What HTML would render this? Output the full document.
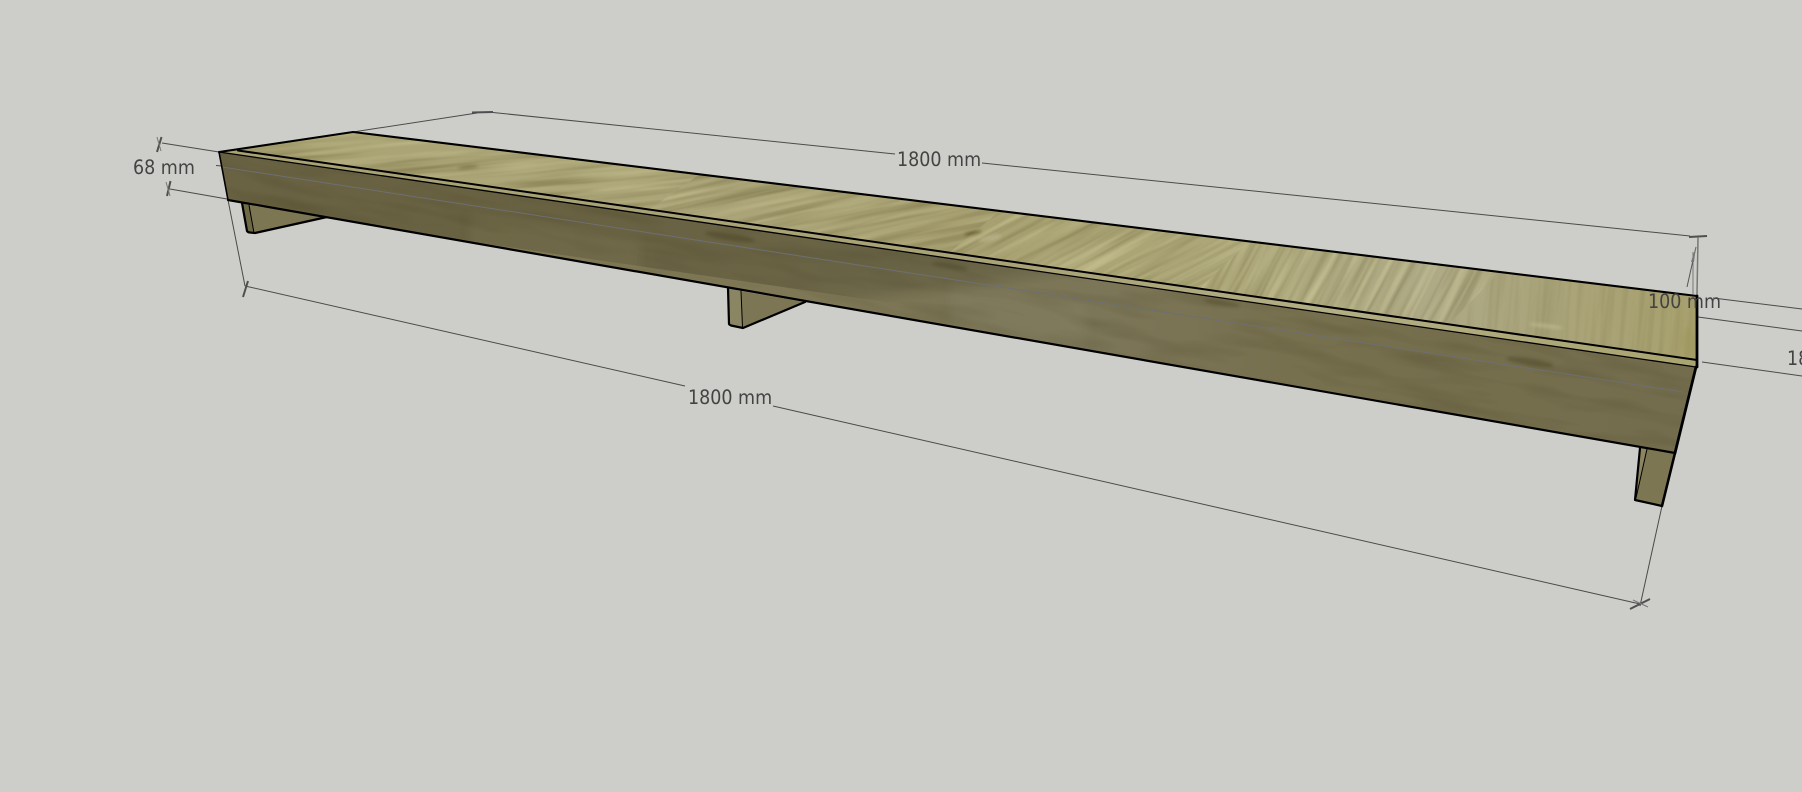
<!DOCTYPE html>
<html lang="en">
<head>
<meta charset="utf-8">
<title>Shelf model</title>
<style>
html,body{margin:0;padding:0;background:#cdcec9;width:1802px;height:792px;overflow:hidden}
svg{display:block}
text{font-family:"DejaVu Sans","Liberation Sans",sans-serif;font-size:17.5px;fill:#434343}
</style>
</head>
<body>
<svg width="1802" height="792" viewBox="0 0 1802 792" xmlns="http://www.w3.org/2000/svg">
<defs>
  <linearGradient id="topG" gradientUnits="userSpaceOnUse" x1="220" y1="0" x2="1697" y2="0">
    <stop offset="0" stop-color="#a8a272"/>
    <stop offset=".2" stop-color="#aca678"/>
    <stop offset=".35" stop-color="#aaa478"/>
    <stop offset=".5" stop-color="#a8a172"/>
    <stop offset=".62" stop-color="#aba576"/>
    <stop offset=".72" stop-color="#ada87c"/>
    <stop offset=".82" stop-color="#aeaa86"/>
    <stop offset=".9" stop-color="#aaa47a"/>
    <stop offset="1" stop-color="#a8a16e"/>
  </linearGradient>
  <linearGradient id="frontG" gradientUnits="userSpaceOnUse" x1="220" y1="0" x2="1697" y2="0">
    <stop offset="0" stop-color="#7d7754"/>
    <stop offset=".2" stop-color="#7b7451"/>
    <stop offset=".38" stop-color="#7e7856"/>
    <stop offset=".5" stop-color="#7b7556"/>
    <stop offset=".6" stop-color="#7c7658"/>
    <stop offset=".72" stop-color="#77704f"/>
    <stop offset=".85" stop-color="#746e4d"/>
    <stop offset="1" stop-color="#736d4e"/>
  </linearGradient>
  <linearGradient id="band" gradientUnits="userSpaceOnUse" x1="950" y1="258" x2="955.500" y2="296">
    <stop offset="0" stop-color="#2a2410" stop-opacity=".24"/>
    <stop offset=".55" stop-color="#2a2410" stop-opacity=".18"/>
    <stop offset="1" stop-color="#2a2410" stop-opacity="0"/>
  </linearGradient>
  <linearGradient id="trimG" gradientUnits="userSpaceOnUse" x1="220" y1="0" x2="1697" y2="0">
    <stop offset="0" stop-color="#a8a274"/>
    <stop offset=".55" stop-color="#a9a377"/>
    <stop offset=".75" stop-color="#b3ae84"/>
    <stop offset="1" stop-color="#aaa470"/>
  </linearGradient>

  <filter id="grainFine" x="0" y="0" width="100%" height="100%" color-interpolation-filters="sRGB">
    <feTurbulence type="fractalNoise" baseFrequency="0.006 0.16" numOctaves="3" seed="4"/>
    <feColorMatrix type="matrix" values="0 0 0 0 .34  0 0 0 0 .30  0 0 0 0 .14  2.4 0 0 0 -1.02"/>
    <feGaussianBlur stdDeviation=".6"/>
  </filter>
  <filter id="grainLight" x="0" y="0" width="100%" height="100%" color-interpolation-filters="sRGB">
    <feTurbulence type="fractalNoise" baseFrequency="0.007 0.14" numOctaves="3" seed="11"/>
    <feColorMatrix type="matrix" values="0 0 0 0 .88  0 0 0 0 .86  0 0 0 0 .68  2.6 0 0 0 -1.15"/>
    <feGaussianBlur stdDeviation=".6"/>
  </filter>
  <filter id="patch" x="0" y="0" width="100%" height="100%" color-interpolation-filters="sRGB">
    <feTurbulence type="fractalNoise" baseFrequency="0.012 0.07" numOctaves="2" seed="7"/>
    <feColorMatrix type="matrix" values="0 0 0 0 .20  0 0 0 0 .17  0 0 0 0 .06  2.2 0 0 0 -1"/>
  </filter>
  <filter id="soft" x="-30%" y="-100%" width="160%" height="300%"><feGaussianBlur stdDeviation="5"/></filter>
  <filter id="soft1" x="-30%" y="-100%" width="160%" height="300%"><feGaussianBlur stdDeviation="1.500"/></filter>

  <clipPath id="s1"><polygon points="238,150.500 353,132 700,174 650,209"/></clipPath>
  <clipPath id="s2"><polygon points="650,209 700,174 1000,211 950,252"/></clipPath>
  <clipPath id="s3"><polygon points="950,252 1000,211 1250,241 1200,288"/></clipPath>
  <clipPath id="s4"><polygon points="1200,288 1250,241 1500,272 1450,323"/></clipPath>
  <clipPath id="s5"><polygon points="1450,323 1500,272 1697,296 1697,360"/></clipPath>
  <clipPath id="topC"><polygon points="238,150.500 353,132 1697,296 1697,360"/></clipPath>
  <clipPath id="front"><polygon points="219,152 1696,367 1675,453 228,200"/></clipPath>
</defs>

<rect width="1802" height="792" fill="#cdcec9"/>

<!-- Dimension lines -->
<g fill="none" stroke="#4a4a4a" stroke-width="1">
  <path d="M353 132L477 113"/>
  <path d="M488 112L895 154"/>
  <path d="M982 163L1690 236"/>
  <path d="M245 286L685 386"/>
  <path d="M773 406L1640 604"/>
  <path d="M1640 606L1662 506"/>
  <path d="M228 200L245 286"/>
  <path d="M162 143L219 152"/>
  <path d="M170 189L227 199"/>
  <path d="M1713 298L1802 309"/>
  <path d="M1698 317L1802 331"/>
  <path d="M1702 362L1802 376"/>
  <path d="M216 165.500L222 166"/>
</g>
<g fill="none" stroke="#4f4f4f" stroke-width="2">
  <path d="M472 112.500L493 112"/>
  <path d="M1689 237L1707 236"/>
  <path d="M161.500 137L157 152"/>
  <path d="M170.500 181L167 196"/>
  <path d="M248 281L243 297"/>
  <path d="M1630 609L1650 599"/>
</g>
<g fill="none" stroke="#777" stroke-width="1">
  <path d="M157 137L161 151"/>
  <path d="M166 182L170 196"/>
  <path d="M1633 600L1648 607"/>
  <path d="M1698 237L1697 295" stroke-width="1.500"/>
  <path d="M1693 252L1693 294"/>
</g>
<path d="M1696 247L1687 287" stroke="#555" stroke-width="1" fill="none"/>
<path d="M1696 246L1691 262L1694 262Z" fill="#777"/>

<!-- Legs -->
<polygon points="242,203 247,232 255,233 327,217 249,205" fill="#7c7653"/>
<polygon points="242,203 249,205 254,233 247,232" fill="#6f6945"/>
<g fill="none" stroke="#000" stroke-linejoin="round" stroke-linecap="round">
  <path d="M242 203L247 231Q248 232.500 250 232.500L255 233L327 217" stroke-width="2.200"/>
  <path d="M249 205L254 233" stroke-width="1"/>
</g>
<polygon points="728,288 729,325 743,328 805,302 741,291" fill="#7c7654"/>
<polygon points="728,288 741,291 743,328 729,325" fill="#8a8562"/>
<g fill="none" stroke="#000" stroke-linejoin="round" stroke-linecap="round">
  <path d="M728 288L729 324Q729.500 325 731 325.500L743 328L805 302" stroke-width="2.200"/>
  <path d="M741 291L742.500 327" stroke-width="1"/>
</g>
<polygon points="1640,448 1635,500 1662,506 1675,453" fill="#7c7653"/>
<polygon points="1640,448 1647,449 1636,498 1635,500" fill="#8b8560"/>
<g fill="none" stroke="#000" stroke-linejoin="round" stroke-linecap="round">
  <path d="M1640 448L1635 500L1662 506" stroke-width="2.200"/>
  <path d="M1662 506L1675 453" stroke-width="2.600"/>
  <path d="M1647 449L1636 498" stroke-width="1"/>
</g>

<!-- Front face -->
<polygon points="219,152 1696,367 1675,453 228,200" fill="url(#frontG)"/>
<g clip-path="url(#front)">
  <rect x="150" y="110" width="1650" height="90" transform="rotate(9.900 219 152)" filter="url(#patch)" opacity=".16"/>
  <polygon points="219,152 1697,367 1697,420 219,205" fill="url(#band)"/>
  <!-- lighter blocks -->
  <polygon points="470,215 640,240 640,278 470,250" fill="#8a8562" opacity=".22" filter="url(#soft)"/>
  <polygon points="950,285 1087,305 1087,345 950,322" fill="#8d8a70" opacity=".24" filter="url(#soft)"/>
  <!-- dark smudges -->
  <ellipse cx="730" cy="237" rx="25" ry="3.500" transform="rotate(9 730 237)" fill="#3e3718" opacity=".35" filter="url(#soft1)"/>
  <ellipse cx="950" cy="266" rx="18" ry="3" transform="rotate(9 950 266)" fill="#3e3718" opacity=".28" filter="url(#soft1)"/>
  <ellipse cx="1222" cy="303" rx="18" ry="3" transform="rotate(9 1222 303)" fill="#3e3718" opacity=".28" filter="url(#soft1)"/>
  <ellipse cx="1530" cy="362" rx="24" ry="3.500" transform="rotate(9 1530 362)" fill="#3e3718" opacity=".35" filter="url(#soft1)"/>
</g>
<path d="M222 167L1683 392" stroke="#6d6f72" stroke-width="1" fill="none"/>

<!-- Top face -->
<polygon points="219,152 353,132 1697,296 1697,367" fill="url(#topG)"/>
<g clip-path="url(#s1)"><rect x="100" y="-100" width="800" height="500" transform="rotate(-5 450 170)" filter="url(#grainFine)" opacity=".34"/><rect x="100" y="-100" width="800" height="500" transform="rotate(-5 450 170)" filter="url(#grainLight)" opacity=".3"/></g>
<g clip-path="url(#s2)"><rect x="500" y="-100" width="700" height="500" transform="rotate(-12 850 210)" filter="url(#grainFine)" opacity=".36"/><rect x="500" y="-100" width="700" height="500" transform="rotate(-12 850 210)" filter="url(#grainLight)" opacity=".3"/></g>
<g clip-path="url(#s3)"><rect x="800" y="-100" width="600" height="700" transform="rotate(-28 1100 250)" filter="url(#grainFine)" opacity=".32"/><rect x="800" y="-100" width="600" height="700" transform="rotate(-28 1100 250)" filter="url(#grainLight)" opacity=".4"/></g>
<g clip-path="url(#s4)"><rect x="1050" y="-150" width="500" height="800" transform="rotate(-62 1350 280)" filter="url(#grainFine)" opacity=".26"/><rect x="1050" y="-150" width="500" height="800" transform="rotate(-62 1350 280)" filter="url(#grainLight)" opacity=".4"/></g>
<g clip-path="url(#s5)"><rect x="1350" y="100" width="500" height="400" transform="rotate(-85 1600 300)" filter="url(#grainFine)" opacity=".14"/></g>
<g clip-path="url(#topC)">
  <ellipse cx="973" cy="233" rx="9" ry="1.500" transform="rotate(-12 973 233)" fill="#4a4218" opacity=".7" filter="url(#soft1)"/>
  <ellipse cx="468" cy="167" rx="10" ry="1.200" transform="rotate(-6 468 167)" fill="#4a4218" opacity=".45" filter="url(#soft1)"/>
  <ellipse cx="990" cy="238" rx="12" ry="3" transform="rotate(-12 990 238)" fill="#c4bd98" opacity=".5" filter="url(#soft1)"/>
  <ellipse cx="1546" cy="326" rx="18" ry="2" transform="rotate(7 1546 326)" fill="#cfc9a2" opacity=".45" filter="url(#soft1)"/>
  <ellipse cx="1688" cy="342" rx="6" ry="14" fill="#9c9450" opacity=".3" filter="url(#soft1)"/>
</g>
<polygon points="219,152 238,150.500 1697,360 1697,367" fill="url(#trimG)"/>

<!-- Model edges -->
<g fill="none" stroke="#000" stroke-linecap="round" stroke-linejoin="round">
  <path d="M219 152L353 132L1697 296" stroke-width="2.100"/>
  <path d="M238 150.500L1697 360" stroke-width="2"/>
  <path d="M219 152L1696 367" stroke-width="1.300"/>
  <path d="M228 200L1675 453" stroke-width="2.200"/>
  <path d="M219 152L228 200" stroke-width="1.600"/>
  <path d="M1697 296L1697 367" stroke-width="2.800"/>
  <path d="M1696 367L1675 453" stroke-width="2.800"/>
</g>

<!-- Labels -->
<text transform="translate(133 174) scale(1 1.1)">68 mm</text>
<text transform="translate(897 166) scale(1 1.1)">1800 mm</text>
<text transform="translate(688 404) scale(1 1.1)">1800 mm</text>
<text transform="translate(1648 308) scale(1 1.1)">100 mm</text>
<text transform="translate(1787 365) scale(1 1.1)">1800 mm</text>
</svg>
</body>
</html>
